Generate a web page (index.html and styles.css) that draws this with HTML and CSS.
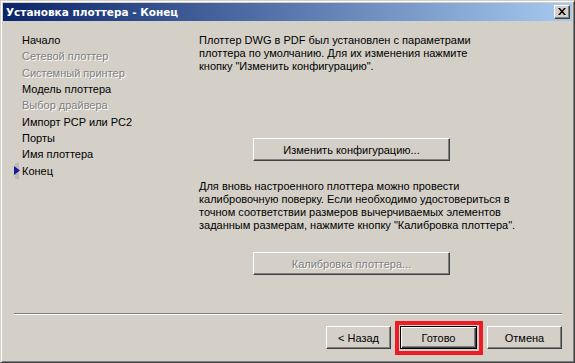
FILE: index.html
```html
<!DOCTYPE html>
<html lang="ru">
<head>
    <meta charset="UTF-8">
    <title>Установка плоттера - Конец</title>
    <link rel="stylesheet" href="styles.css">
</head>
<body>
    <div class="window">
        <div class="titlebar">
            <span class="title">Установка плоттера - Конец</span>
            <span class="close-btn">
                <svg width="8" height="7" viewBox="0 0 8 7">
                    <path d="M0 0h2l2 2.5 2-2.5h2l-3 3.5 3 3.5h-2l-2-2.5-2 2.5h-2l3-3.5z" fill="#000"/>
                </svg>
            </span>
        </div>

        <div class="dlg-body">
            <div class="main">
                <ul class="steps">
                    <li><span class="mark"></span>Начало</li>
                    <li class="disabled"><span class="mark"></span>Сетевой плоттер</li>
                    <li class="disabled"><span class="mark"></span>Системный принтер</li>
                    <li><span class="mark"></span>Модель плоттера</li>
                    <li class="disabled"><span class="mark"></span>Выбор драйвера</li>
                    <li><span class="mark"></span>Импорт PCP или PC2</li>
                    <li><span class="mark"></span>Порты</li>
                    <li><span class="mark"></span>Имя плоттера</li>
                    <li class="current">
                        <span class="mark">
                            <svg width="6" height="9" viewBox="0 0 6 9"><path d="M0 0l6 4.5-6 4.5z" fill="#1a1a9c"/></svg>
                        </span>Конец
                    </li>
                </ul>

                <div class="content">
                    <p class="text first">Плоттер DWG в PDF был установлен с параметрами<br>плоттера по умолчанию. Для их изменения нажмите<br>кнопку "Изменить конфигурацию".</p>
                    <button class="btn wide config-btn">Изменить конфигурацию...</button>
                    <p class="text">Для вновь настроенного плоттера можно провести<br>калибровочную поверку. Если необходимо удостовериться в<br>точном соответствии размеров вычерчиваемых элементов<br>заданным размерам, нажмите кнопку "Калибровка плоттера".</p>
                    <button class="btn wide calib-btn" disabled>Калибровка плоттера...</button>
                </div>
            </div>

            <div class="separator"></div>

            <div class="buttons">
                <button class="btn back">&lt; Назад</button>
                <span class="highlight">
                    <button class="btn default">Готово</button>
                </span>
                <button class="btn cancel">Отмена</button>
            </div>
        </div>
    </div>
</body>
</html>
```

FILE: styles.css
```css
* {
    box-sizing: border-box;
}

body {
    margin: 0;
    background: #d4d0c8;
    font-family: "Liberation Sans", Arial, sans-serif;
    font-size: 11px;
    color: #000;
}

.window {
    width: 575px;
    height: 363px;
    display: flex;
    flex-direction: column;
    background: #d4d0c8;
    border: 1px solid;
    border-color: #d4d0c8 #404040 #404040 #d4d0c8;
    box-shadow: inset 1px 1px #fff, inset -1px -1px #808080;
    padding: 2px;
}

.titlebar {
    height: 18px;
    display: flex;
    align-items: center;
    padding-left: 3px;
    background: linear-gradient(to right, #0a246a, #a6caf0);
}

.title {
    color: #fff;
    font-family: "DejaVu Sans", sans-serif;
    font-weight: bold;
    font-size: 10.5px;
    white-space: nowrap;
}

.close-btn {
    margin-left: auto;
    margin-right: 2px;
    width: 16px;
    height: 14px;
    display: flex;
    align-items: center;
    justify-content: center;
    background: #d4d0c8;
    border: 1px solid;
    border-color: #fff #404040 #404040 #fff;
    box-shadow: inset -1px -1px #808080;
    padding-bottom: 1px;
}

.dlg-body {
    flex: 1;
    display: flex;
    flex-direction: column;
    padding: 11px 10px 11px 11px;
}

.main {
    flex: 1;
    display: flex;
}

.steps {
    list-style: none;
    margin: 0;
    padding: 0;
    width: 185px;
}

.steps li {
    display: flex;
    align-items: center;
    height: 16.33px;
    white-space: nowrap;
}

.mark {
    width: 8px;
    height: 100%;
    display: flex;
    align-items: center;
}

.current .mark {
    background: linear-gradient(to right, transparent 1px, #bdbab4 1px, #bdbab4 5px, transparent 5px);
}

.steps .disabled {
    color: #808080;
    text-shadow: 1px 1px 0 #fff;
}

.content {
    flex: 1;
}

.text {
    margin: 0;
    line-height: 13px;
    white-space: nowrap;
}

.text.first {
    margin-top: 2px;
}

.btn {
    display: block;
    height: 23px;
    padding: 0;
    font-family: inherit;
    font-size: 11px;
    color: #000;
    background: #d4d0c8;
    border: 1px solid;
    border-color: #fff #404040 #404040 #fff;
    box-shadow: inset -1px -1px #808080;
    border-radius: 0;
}

.btn:disabled {
    color: #808080;
    text-shadow: 1px 1px 0 #fff;
}

.btn.wide {
    width: 197px;
    margin-left: 54px;
}

.config-btn {
    margin-top: 65px;
    margin-bottom: 19px;
}

.calib-btn {
    margin-top: 20px;
}

.separator {
    height: 2px;
    border-top: 1px solid #808080;
    border-bottom: 1px solid #fff;
}

.buttons {
    display: flex;
    justify-content: flex-end;
    align-items: center;
    margin-top: 11px;
    height: 23px;
}

.back {
    width: 65px;
}

.cancel {
    width: 75px;
    margin-left: 10px;
}

.highlight {
    position: relative;
    margin-left: 9px;
}

.highlight::after {
    content: "";
    position: absolute;
    left: -5px;
    top: -5px;
    right: -6px;
    bottom: -6px;
    border: 4px solid #ed1c24;
}

.default {
    width: 77px;
    border: 1px solid #000;
    box-shadow: inset 1px 1px #fff, inset -1px -1px #404040, inset -2px -2px #808080;
}
```
